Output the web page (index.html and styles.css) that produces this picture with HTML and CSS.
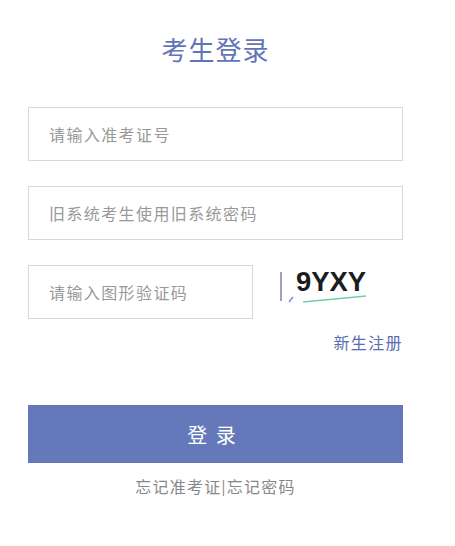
FILE: index.html
```html
<!DOCTYPE html>
<html lang="zh-CN">
<head>
    <meta charset="UTF-8">
    <meta name="viewport" content="width=device-width, initial-scale=1.0">
    <title>考生登录</title>
    <link rel="stylesheet" href="styles.css">
</head>
<body>
    <div class="login">
        <h2 class="login-title">考生登录</h2>
        <div class="form-group">
            <input type="text" class="field" placeholder="请输入准考证号">
        </div>
        <div class="form-group">
            <input type="password" class="field" placeholder="旧系统考生使用旧系统密码">
        </div>
        <div class="captcha-row">
            <input type="text" class="field field-code" placeholder="请输入图形验证码">
            <svg class="captcha" width="92" height="40" viewBox="0 0 92 40">
                <line x1="1" y1="6" x2="1" y2="35" stroke="#7d86a6" stroke-width="1.5"/>
                <text x="16" y="25" font-family="Liberation Sans, Arial, sans-serif" font-size="27" font-weight="bold" fill="#1c1c1c" textLength="70" lengthAdjust="spacingAndGlyphs">9YXY</text>
                <path d="M23 36 Q55 33 86 30" stroke="#6fcfa4" stroke-width="1.3" fill="none"/>
                <line x1="9" y1="36" x2="13" y2="31" stroke="#8a7fe0" stroke-width="1.5"/>
            </svg>
        </div>
        <div class="register"><a href="#">新生注册</a></div>
        <button class="btn-login">登 录</button>
        <div class="forgot">忘记准考证|忘记密码</div>
    </div>
</body>
</html>
```

FILE: styles.css
```css
body {
    font-family: "Noto Sans CJK SC", "Microsoft YaHei", sans-serif;
    background-color: #fff;
    margin: 0;
}
.login {
    width: 375px;
    margin-left: 28px;
    padding-top: 34px;
}
.login-title {
    margin: 0 0 43px;
    font-size: 26px;
    line-height: 30px;
    font-weight: normal;
    letter-spacing: 1px;
    color: #6274b8;
    text-align: center;
}
.form-group {
    margin-bottom: 25px;
}
.field {
    display: block;
    width: 100%;
    height: 54px;
    box-sizing: border-box;
    padding: 0 0 0 20px;
    border: 1px solid #d8d8d8;
    font-family: inherit;
    font-size: 16px;
    letter-spacing: 1.4px;
    color: #333;
    outline: none;
}
.field::placeholder {
    color: #999;
}
.captcha-row {
    display: flex;
    align-items: flex-start;
    gap: 27px;
}
.field-code {
    width: 225px;
    flex: none;
}
.captcha {
    display: block;
    margin-top: 1px;
}
.register {
    margin-top: 13px;
    text-align: right;
    line-height: 20px;
}
.register a {
    font-size: 16px;
    letter-spacing: 1.4px;
    color: #5b6db0;
    text-decoration: none;
}
.btn-login {
    display: block;
    width: 100%;
    height: 58px;
    margin-top: 53px;
    padding: 0 6px 0 0;
    background-color: #6578ba;
    color: #fff;
    border: none;
    font-family: inherit;
    font-size: 20px;
    letter-spacing: 2px;
    cursor: pointer;
}
.forgot {
    margin-top: 13px;
    line-height: 20px;
    text-align: center;
    font-size: 16px;
    letter-spacing: 1.2px;
    color: #888;
}
```
